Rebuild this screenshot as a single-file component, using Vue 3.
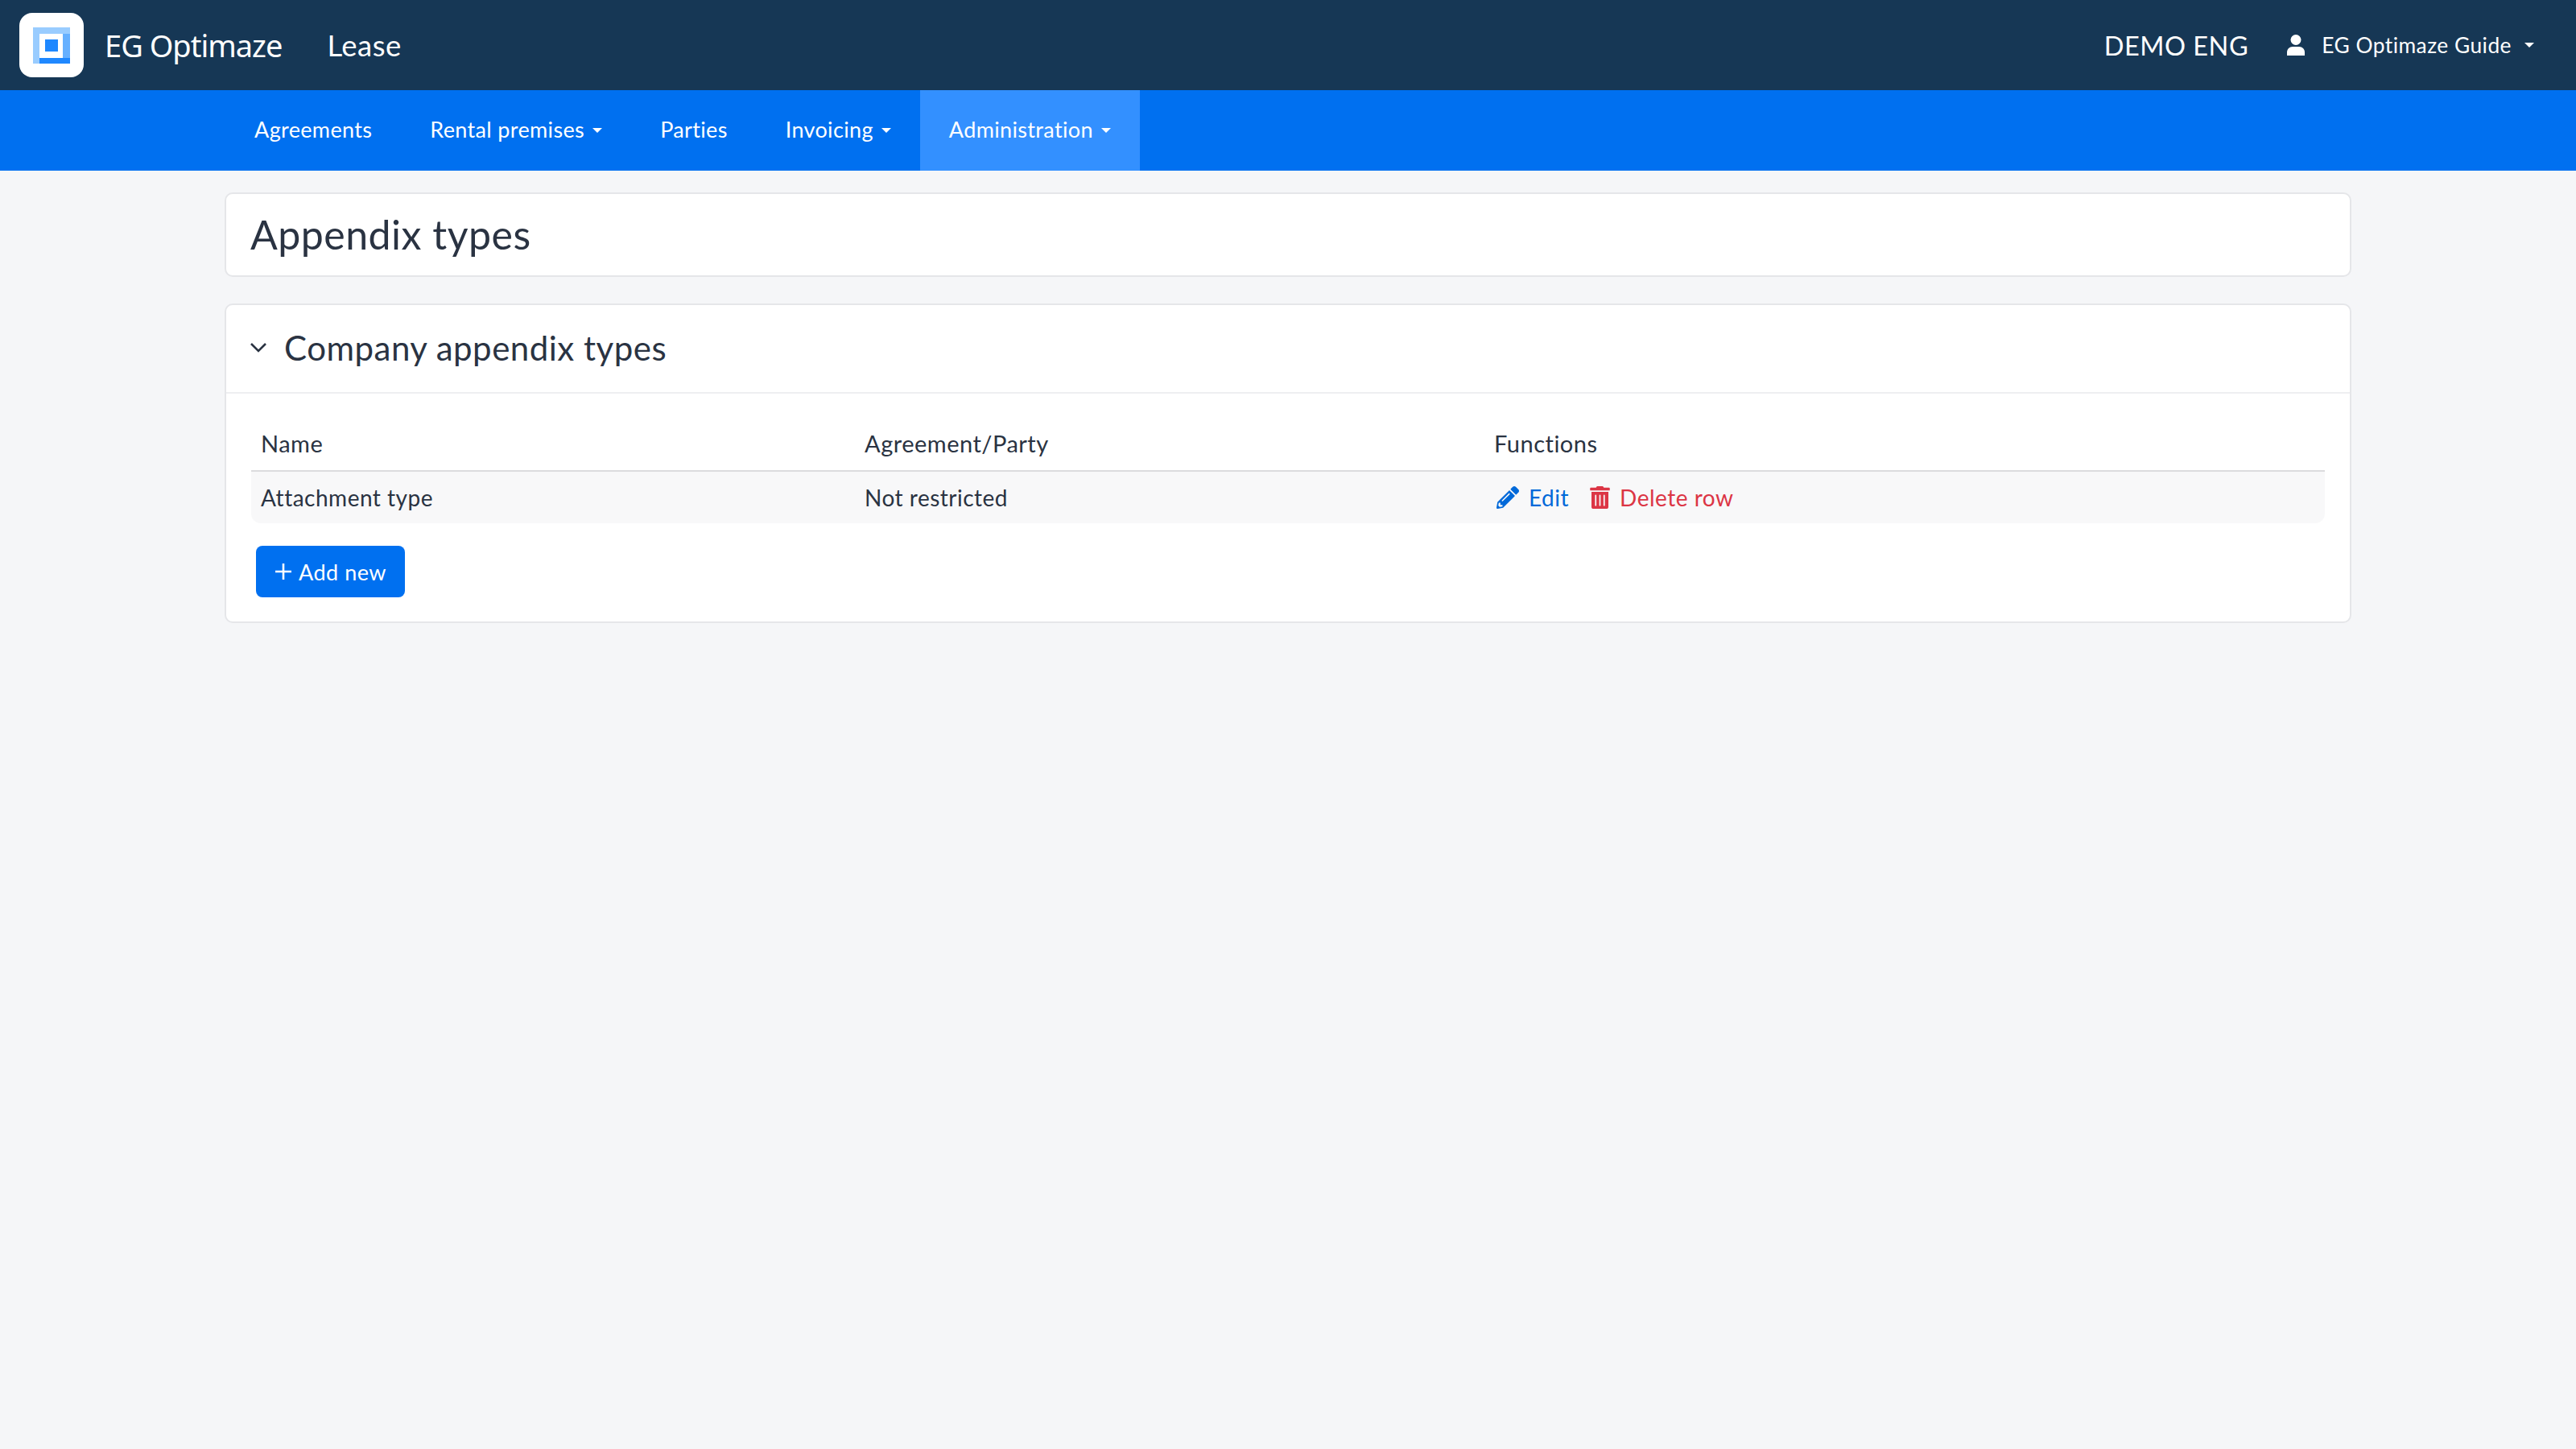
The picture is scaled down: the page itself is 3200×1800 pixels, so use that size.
<script setup>
const navItems = [
    { label: 'Agreements', caret: false, active: false },
    { label: 'Rental premises', caret: true, active: false },
    { label: 'Parties', caret: false, active: false },
    { label: 'Invoicing', caret: true, active: false },
    { label: 'Administration', caret: true, active: true },
];

const rows = [
    { id: 1, name: 'Attachment type', restriction: 'Not restricted' },
];
</script>

<template>
    <div class="page">
        <header class="topbar">
            <div class="logo">
                <svg width="46" height="45" viewBox="0 0 46 45">
                    <rect x="0" y="0" width="46" height="8" fill="#99ccff" />
                    <rect x="0" y="8" width="8" height="37" fill="#99ccff" />
                    <rect x="37" y="8" width="9" height="30" fill="#66b0ff" />
                    <rect x="8" y="38" width="38" height="7" fill="#1f88ff" />
                    <rect x="15" y="15" width="16" height="15" fill="#1f88ff" />
                </svg>
            </div>
            <span class="brand">EG Optimaze</span>
            <span class="module">Lease</span>
            <span class="company">DEMO ENG</span>
            <div class="user">
                <svg class="user__icon" width="22" height="26" viewBox="0 0 22 26">
                    <circle cx="11" cy="6.500" r="6.500" fill="#fff" />
                    <path fill="#fff" d="M0 26V22C0 18 3 15 7 15H15C19 15 22 18 22 22V26Z" />
                </svg>
                <span>EG Optimaze Guide</span>
                <i class="caret"></i>
            </div>
        </header>

        <nav class="nav">
            <a v-for="item in navItems" :key="item.label" class="nav__item"
                :class="{ 'nav__item--active': item.active }">
                {{ item.label }}
                <i v-if="item.caret" class="caret"></i>
            </a>
        </nav>

        <main class="content">
            <section class="card title-card">
                <h1>Appendix types</h1>
            </section>

            <section class="card">
                <div class="card__header">
                    <svg class="chevron" width="22" height="13" viewBox="0 0 22 13">
                        <path d="M2 2l9 9 9-9" fill="none" stroke="#2a3342" stroke-width="2.6" />
                    </svg>
                    <h2>Company appendix types</h2>
                </div>
                <div class="card__body">
                    <div class="table">
                        <div class="table__row table__row--head">
                            <div>Name</div>
                            <div>Agreement/Party</div>
                            <div>Functions</div>
                        </div>
                        <div v-for="row in rows" :key="row.id" class="table__row table__row--body">
                            <div>{{ row.name }}</div>
                            <div>{{ row.restriction }}</div>
                            <div class="actions">
                                <a class="action action--edit">
                                    <svg width="28" height="28" viewBox="0 0 512 512">
                                        <path fill="currentColor" d="M497.900 142.100l-46.100 46.100c-4.700 4.700-12.300 4.700-17 0l-111-111c-4.700-4.700-4.700-12.300 0-17l46.100-46.100c18.700-18.700 49.100-18.700 67.900 0l60.100 60.100c18.800 18.700 18.800 49.100 0 67.900zM284.200 99.800L21.600 362.400.4 483.900c-2.900 16.400 11.400 30.600 27.800 27.800l121.500-21.300 262.600-262.600c4.700-4.700 4.700-12.300 0-17l-111-111c-4.800-4.700-12.400-4.700-17.100 0zM124.100 339.900c-5.500-5.500-5.500-14.300 0-19.800l154-154c5.500-5.500 14.300-5.500 19.800 0s5.500 14.300 0 19.800l-154 154c-5.500 5.500-14.300 5.500-19.800 0zM88 424h48v36.300l-64.500 11.300-31.100-31.100L51.700 376H88v48z" />
                                    </svg>
                                    Edit
                                </a>
                                <a class="action action--delete">
                                    <svg width="25" height="28" viewBox="0 0 448 512">
                                        <path fill="currentColor" d="M32 464a48 48 0 0 0 48 48h288a48 48 0 0 0 48-48V128H32zm272-256a16 16 0 0 1 32 0v224a16 16 0 0 1-32 0zm-96 0a16 16 0 0 1 32 0v224a16 16 0 0 1-32 0zm-96 0a16 16 0 0 1 32 0v224a16 16 0 0 1-32 0zM432 32H312l-9.400-18.700A24 24 0 0 0 281.100 0H166.800a23.720 23.720 0 0 0-21.400 13.300L136 32H16A16 16 0 0 0 0 48v32a16 16 0 0 0 16 16h416a16 16 0 0 0 16-16V48a16 16 0 0 0-16-16z" />
                                    </svg>
                                    Delete row
                                </a>
                            </div>
                        </div>
                    </div>
                    <button class="btn-add">
                        <svg width="22" height="22" viewBox="0 0 22 22">
                            <path d="M11 1v20M1 11h20" stroke="#fff" stroke-width="2.600" />
                        </svg>
                        Add new
                    </button>
                </div>
            </section>
        </main>
    </div>
</template>

<style scoped>
.page,
.page * {
    box-sizing: border-box;
}

.page {
    min-height: 1800px;
    background-color: #f5f6f8;
    font-family: "Lato", "Open Sans", sans-serif;
    font-size: 28px;
    letter-spacing: 0.5px;
    color: #2a3342;
}

.topbar {
    display: flex;
    align-items: center;
    height: 112px;
    padding: 0 24px;
    background-color: #163755;
    color: #fff;
}

.logo {
    display: flex;
    align-items: center;
    justify-content: center;
    width: 80px;
    height: 80px;
    border-radius: 16px;
    background-color: #fff;
}

.brand {
    margin-left: 26px;
    font-family: "Noto Sans", sans-serif;
    font-size: 38px;
    letter-spacing: -1px;
}

.module {
    margin-left: 56px;
    font-size: 36.500px;
}

.company {
    margin-left: auto;
    font-size: 32.500px;
}

.user {
    display: flex;
    align-items: center;
    margin-left: 48px;
    margin-right: 28px;
    font-size: 26.300px;
}

.user__icon {
    margin-right: 21px;
}

.caret {
    display: inline-block;
    margin-left: 16px;
    vertical-align: middle;
    border-top: 6px solid #fff;
    border-left: 6px solid transparent;
    border-right: 6px solid transparent;
}

.nav {
    display: flex;
    height: 100px;
    padding-left: 280px;
    background-color: #0070f0;
    font-size: 27px;
    letter-spacing: 0.35px;
}

.nav__item {
    display: flex;
    align-items: center;
    padding: 0 36px 3px;
    color: #fff;
}

.nav__item .caret {
    margin-top: 3px;
    margin-left: 10px;
}

.nav__item--active {
    background-color: #3390ff;
}

.content {
    display: flex;
    flex-direction: column;
    gap: 33px;
    width: 2642px;
    margin: 0 auto;
    padding-top: 27px;
}

.card {
    border: 2px solid #e5e6e9;
    border-radius: 10px;
    background-color: #fff;
}

.title-card {
    display: flex;
    align-items: center;
    height: 105px;
    padding: 0 30px 1px;
}

h1 {
    margin: 0;
    font-size: 50px;
    font-weight: 400;
}

.card__header {
    display: flex;
    align-items: center;
    height: 110px;
    padding: 0 29px 3px;
    border-bottom: 2px solid #eeeff1;
}

.chevron {
    margin-right: 21px;
}

h2 {
    margin: 0;
    font-size: 42px;
    font-weight: 400;
}

.card__body {
    padding: 0 31px 30px;
}

.table__row {
    display: grid;
    grid-template-columns: 750px 782px 1fr;
    align-items: center;
    padding-left: 12px;
}

.table__row--head {
    height: 97px;
    padding-top: 27px;
    border-bottom: 2px solid #dcdcde;
    font-size: 29px;
}

.table__row--body {
    height: 64px;
    border-radius: 0 0 12px 12px;
    background-color: #f8f8f9;
}

.actions {
    display: flex;
    gap: 23px;
}

.action {
    display: flex;
    align-items: center;
    gap: 12px;
    padding-left: 3px;
}

.action--edit {
    color: #0069d9;
}

.action--delete {
    color: #dc3545;
}

.btn-add {
    display: flex;
    align-items: center;
    gap: 8px;
    height: 64px;
    margin: 28px 0 0 6px;
    padding: 0 23px;
    border: none;
    border-radius: 8px;
    background-color: #0070f0;
    color: #fff;
    font-family: inherit;
    font-size: 27px;
    letter-spacing: inherit;
}
</style>

<style>
body {
    background-color: #f5f6f8;
}
</style>
